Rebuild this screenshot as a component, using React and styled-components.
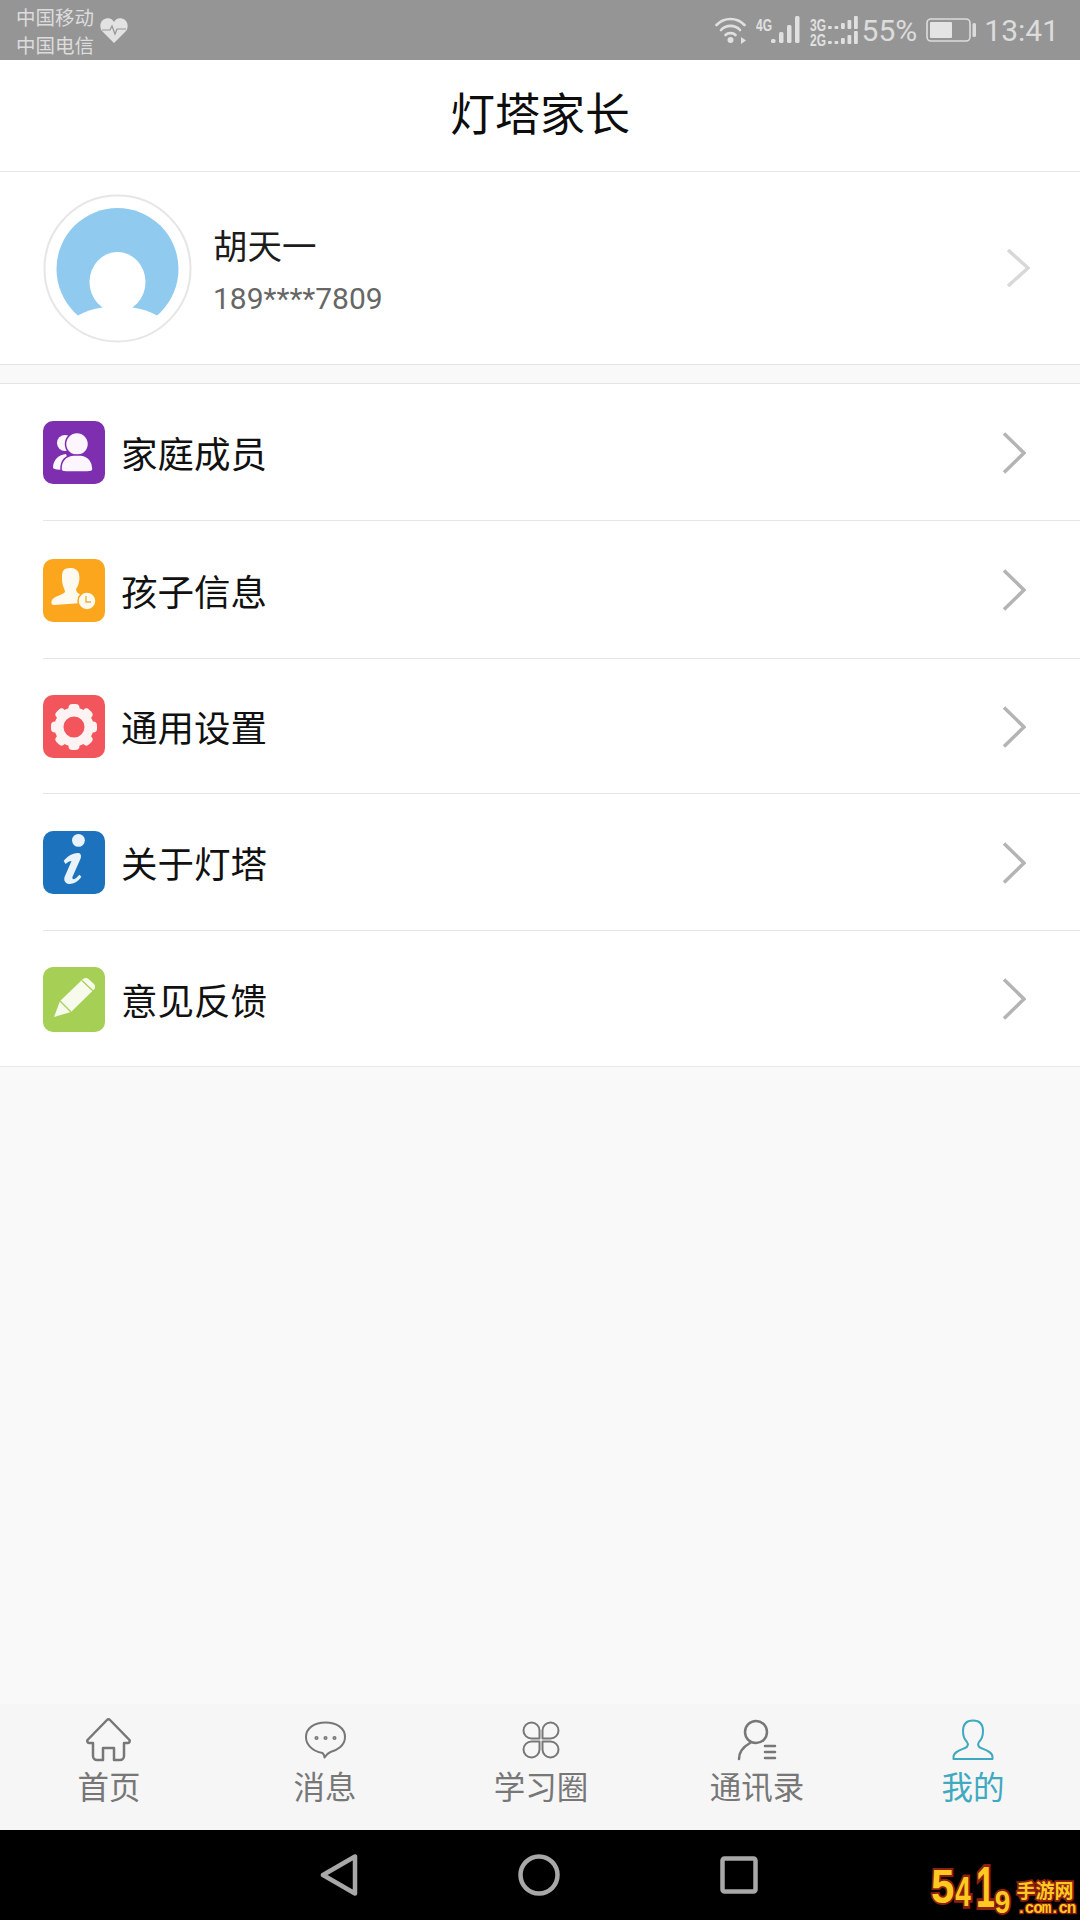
import styled, { createGlobalStyle } from "styled-components"

const GlobalStyle = createGlobalStyle`
  html, body {
    margin: 0;
    padding: 0;
    background: #f9f9f9;
  }
  * {
    box-sizing: border-box;
  }
`

const CJK = `Roboto, "Noto Sans CJK SC", sans-serif`

const Page = styled.div`
  width: 1080px;
  height: 1920px;
  display: flex;
  flex-direction: column;
  background: #f9f9f9;
  font-family: ${CJK};
  overflow: hidden;
  position: relative;
`

const StatusBar = styled.div`
  height: 60px;
  flex: none;
  background: #959595;
  color: #dedede;
  display: flex;
  align-items: center;
  justify-content: space-between;
  padding: 0 21px 0 16px;
`

const Carriers = styled.div`
  display: flex;
  align-items: center;
  gap: 6px;
`

const CarrierNames = styled.div`
  font-size: 19.5px;
  line-height: 28px;
  color: #dcdcdc;
  padding-top: 6px;
`

const StatusRight = styled.div`
  display: flex;
  align-items: center;
`

const NetLabels = styled.div`
  display: flex;
  flex-direction: column;
  align-self: flex-start;
  width: ${p => p.$w}px;
  margin: 5px 0 0 ${p => p.$left}px;
  font-family: "Liberation Sans", sans-serif;
  font-size: 16px;
  font-weight: 700;
  line-height: 15px;
  color: #e0e0e0;
  transform: scaleX(0.75);
  transform-origin: left top;
`

const Percent = styled.span`
  font-size: 30px;
  margin: 0 9px 0 4px;
  color: #dcdcdc;
`

const Clock = styled.span`
  font-size: 30px;
  margin-left: 8px;
  color: #dcdcdc;
`

const Header = styled.header`
  height: 112px;
  flex: none;
  background: #fff;
  border-bottom: 1px solid #e8e8e8;
  display: flex;
  align-items: center;
  justify-content: center;
  font-size: 45px;
  color: #0d0d0d;
  padding-bottom: 8px;
`

const Profile = styled.section`
  height: 193px;
  flex: none;
  background: #fff;
  border-bottom: 1px solid #e4e4e4;
  display: flex;
  align-items: center;
  padding: 0 50px 0 43px;
`

const Avatar = styled.svg`
  width: 150px;
  height: 150px;
  flex: none;
  margin-top: 2px;
`

const ProfileText = styled.div`
  flex: 1;
  margin: 6px 0 0 20px;
  display: flex;
  flex-direction: column;
  gap: 9px;
`

const Name = styled.div`
  font-size: 34.5px;
  line-height: 46px;
  color: #1c1c1c;
`

const Phone = styled.div`
  font-size: 30px;
  line-height: 40px;
  color: #666;
`

const Chevron = styled.svg`
  flex: none;
  fill: none;
  stroke: ${p => p.$color};
  stroke-width: 3.5;
`

const Menu = styled.section`
  margin-top: 18px;
  flex: none;
  background: #fff;
  border-top: 1px solid #e4e4e4;
  border-bottom: 1px solid #e8e8e8;
`

const Row = styled.div`
  height: ${p => p.$h}px;
  margin-left: 43px;
  padding: 1px 54px 0 0;
  display: flex;
  align-items: center;
  border-bottom: ${p => (p.$last ? "none" : "1.5px solid #e6e6e6")};
`

const IconBox = styled.div`
  width: 62px;
  height: ${p => p.$h || 63}px;
  flex: none;
  border-radius: 10px;
  background: ${p => p.$bg};
  display: flex;
  align-items: center;
  justify-content: center;
`

const RowLabel = styled.div`
  flex: 1;
  margin-left: 16px;
  font-size: 36.5px;
  color: #111;
`

const Spacer = styled.div`
  flex: 1;
`

const TabBar = styled.nav`
  height: 126px;
  flex: none;
  background: #f6f6f6;
  display: grid;
  grid-template-columns: repeat(5, 216px);
  padding-left: 1px;
`

const Tab = styled.div`
  display: flex;
  flex-direction: column;
  align-items: center;
  color: ${p => (p.$active ? "#3fa9bf" : "#777")};
  stroke: ${p => (p.$active ? "#3fa9bf" : "#777")};
`

const TabIcon = styled.div`
  height: 44px;
  margin-top: 14px;
  display: flex;
  align-items: center;
  justify-content: center;
  svg {
    fill: none;
    stroke: inherit;
    stroke-width: 2.5;
    stroke-linejoin: round;
    stroke-linecap: round;
  }
`

const TabLabel = styled.div`
  font-size: 31.5px;
  line-height: 40px;
  margin-top: 7px;
`

const NavBar = styled.div`
  height: 90px;
  flex: none;
  background: #000;
  display: flex;
  align-items: center;
  justify-content: center;
  gap: 160px;
  padding-right: 2px;
  svg {
    fill: none;
    stroke: #a8a8a8;
    stroke-width: 4.5;
    stroke-linejoin: round;
  }
`

const Watermark = styled.div`
  position: absolute;
  left: 931px;
  top: 1866px;
  width: 149px;
  height: 54px;
  display: flex;
  color: #ffc91f;
  font-weight: 700;
  -webkit-text-stroke: 3.5px #8c1f10;
  paint-order: stroke fill;
`

const Digit = styled.span`
  display: block;
  flex: none;
  font-family: "Liberation Sans", sans-serif;
  font-size: ${p => p.$size}px;
  line-height: 0.8;
  height: ${p => p.$size * 0.8}px;
  margin: ${p => p.$top}px 0 0 ${p => p.$left}px;
  transform: scaleY(${p => p.$sy});
  transform-origin: left top;
`

const WatermarkSide = styled.div`
  display: flex;
  flex-direction: column;
  margin: 14px 0 0 6px;
  font-family: "Noto Sans CJK SC", sans-serif;
  font-size: 19px;
  line-height: 20px;
  white-space: nowrap;
`

const WatermarkDomain = styled.div`
  font-family: "Liberation Mono", monospace;
  font-size: 16px;
  line-height: 18px;
  letter-spacing: -1.2px;
  -webkit-text-stroke: 2.5px #8c1f10;
`

function RowChevron() {
  return (
    <Chevron $color="#b4b4b4" width="24" height="42" viewBox="0 0 24 42">
      <path d="M2 1.5 L22 21 L2 40.5" />
    </Chevron>
  )
}

function FamilyIcon() {
  return (
    <svg width="44" height="44" viewBox="0 0 44 44">
      <circle cx="13" cy="12" r="8" fill="#fdf6ff" />
      <path d="M1 37 C1 28 7 24 14 23 L18 34 L14 38 C8 39 3 39 1 37 Z" fill="#fdf6ff" />
      <circle cx="25" cy="13" r="11.5" fill="#fdf6ff" stroke="#7d2fb0" strokeWidth="1.5" />
      <path d="M9 38 C9 29 14 25 21 24 L29 24 C37 25 41 31 41 38 C41 41 37 41 35 41 L14 41 C11 41 9 40 9 38 Z" fill="#fdf6ff" stroke="#7d2fb0" strokeWidth="1.5" />
    </svg>
  )
}

function ChildIcon() {
  return (
    <svg width="46" height="46" viewBox="0 0 46 46">
      <path d="M14 2 C19 0 27 1 28 7 C29 12 28 18 25 22 C25 25 27 27 31 28 L31 36 L3 38 C0 38 0 35 1 33 C3 29 12 28 14 25 C14 22 11 19 11 12 C11 7 11 4 14 2 Z" fill="#fffaf0" />
      <circle cx="36" cy="34" r="9" fill="#fffaf0" stroke="#fba61c" strokeWidth="1.5" />
      <path d="M35 29 V35 H40" fill="none" stroke="#f0b040" strokeWidth="1.4" />
    </svg>
  )
}

function GearIcon() {
  const teeth = [0, 45, 90, 135, 180, 225, 270, 315]
  return (
    <svg width="48" height="48" viewBox="0 0 48 48">
      {teeth.map(a => (
        <rect key={a} x="18.5" y="1" width="11" height="12" rx="4" fill="#fdf3f2" transform={`rotate(${a} 24 24)`} />
      ))}
      <circle cx="24" cy="24" r="15" fill="none" stroke="#fdf3f2" strokeWidth="9" />
    </svg>
  )
}

function InfoIcon() {
  return (
    <svg width="62" height="63" viewBox="0 0 63 63">
      <circle cx="36" cy="9" r="6.5" fill="#e8f3fb" />
      <path d="M21 30 C25 24 33 21 37 22 C39 23 39 26 38 28 L30 46 C29 49 32 49 34 47 L37 44 L39 46 C35 52 29 54 25 53 C22 52 21 49 22 46 L29 30 C27 30 25 31 23 33 Z" fill="#e8f3fb" />
    </svg>
  )
}

function PencilIcon() {
  return (
    <svg width="44" height="44" viewBox="0 0 44 44">
      <path d="M2 40 L8 24 L31 2 C33 0.5 35 0.5 36.5 2 L42 7 C43.5 9 43.5 11 42 12.5 L19 35 Z" fill="#f6fbec" />
      <path d="M8 24 L19 35" stroke="#a5cf55" strokeWidth="1.2" />
      <path d="M30 3.5 L41 14" stroke="#a5cf55" strokeWidth="1.2" />
    </svg>
  )
}

const menuItems = [
  { label: "家庭成员", bg: "#7d2fb0", h: 137, icon: <FamilyIcon /> },
  { label: "孩子信息", bg: "#fba61c", h: 138, icon: <ChildIcon /> },
  { label: "通用设置", bg: "#f2565c", h: 135, icon: <GearIcon /> },
  { label: "关于灯塔", bg: "#1d72bd", h: 137, icon: <InfoIcon /> },
  { label: "意见反馈", bg: "#a5cf55", h: 135, boxH: 65, icon: <PencilIcon />, last: true },
]

const tabs = [
  {
    label: "首页",
    icon: (
      <svg width="48" height="44" viewBox="0 0 46 44">
        <path d="M7 25 V38 a4 4 0 0 0 4 4 h6 V30 h11 V42 h6 a4 4 0 0 0 4-4 V25 h4 a2 2 0 0 0 1.5-3 L24 2 a2 2 0 0 0-3 0 L1.5 22 a2 2 0 0 0 1.5 3 Z" />
      </svg>
    ),
  },
  {
    label: "消息",
    icon: (
      <svg width="43" height="38" viewBox="0 0 42 38">
        <path d="M18 32 C7 30 1.5 23 1.5 16 C1.5 7 10 1.5 21 1.5 C32 1.5 40.5 7 40.5 16 C40.5 25 32 29.5 26 31 C23.5 32 21.5 34 20 36.5 C20 34.5 19 33 18 32 Z" strokeWidth="2" />
        <circle cx="12" cy="17" r="0.8" />
        <circle cx="21" cy="17" r="0.8" />
        <circle cx="30" cy="17" r="0.8" />
      </svg>
    ),
  },
  {
    label: "学习圈",
    icon: (
      <svg width="38" height="38" viewBox="0 0 38 38">
        <g strokeWidth="2">
          <path d="M17.5 17.5 H9.5 a8 8 0 1 1 8-8 Z" />
          <path d="M20.5 17.5 V9.5 a8 8 0 1 1 8 8 Z" />
          <path d="M17.5 20.5 V28.5 a8 8 0 1 1 -8-8 Z" />
          <path d="M20.5 20.5 H28.5 a8 8 0 1 1 -8 8 Z" />
        </g>
      </svg>
    ),
  },
  {
    label: "通讯录",
    icon: (
      <svg width="40" height="42" viewBox="0 0 40 42">
        <circle cx="19" cy="13" r="11" />
        <path d="M2 40 C2 33 6 28 13 24" />
        <path d="M28 27 H38 M28 33 H38 M28 39 H38" />
      </svg>
    ),
  },
  {
    label: "我的",
    active: true,
    icon: (
      <svg width="42" height="42" viewBox="0 0 42 42">
        <path d="M1.5 40 V38 C1.5 33 8 31 13 29 C16 28 16.5 25 15 23 C12 20 11 16 11 12 C11 5 15 1.5 21 1.5 C27 1.5 31 5 31 12 C31 16 30 20 27 23 C25.5 25 26 28 29 29 C34 31 40.5 33 40.5 38 V40 Z" strokeWidth="2" />
      </svg>
    ),
  },
]

const dualBarHeights = [3, 3, 6, 9, 13]

function App() {
  return (
    <Page>
      <GlobalStyle />
      <StatusBar>
        <Carriers>
          <CarrierNames>
            <div>中国移动</div>
            <div>中国电信</div>
          </CarrierNames>
          <svg width="28" height="27" viewBox="0 0 28 27">
            <path d="M14 26 L2 14 C-1 10 0 3 6 1.5 C9.5 0.5 12.5 2 14 5 C15.5 2 18.5 0.5 22 1.5 C28 3 29 10 26 14 Z" fill="#e2e2e2" />
            <path d="M2 13 H10 L12 9 L15 17 L17 12 H26" fill="none" stroke="#959595" strokeWidth="1.2" />
          </svg>
        </Carriers>
        <StatusRight>
          <svg width="33" height="28" viewBox="0 0 33 28">
            <g fill="none" stroke="#e0e0e0" strokeWidth="2.6" strokeLinecap="round">
              <path d="M1.5 9 C9 1 22 1 29.5 9" />
              <path d="M6 14 C11 8.5 20 8.5 25 14" />
              <path d="M10.5 19 C13 16.5 18 16.5 20.5 19" />
            </g>
            <circle cx="15.5" cy="24" r="3" fill="#e0e0e0" />
            <path d="M26 21 L31 24.5 L26 28 Z" fill="#e0e0e0" />
          </svg>
          <NetLabels $w={15} $left={8}>
            <span>4G</span>
          </NetLabels>
          <svg width="29" height="28" viewBox="0 0 29 28">
            {[4, 11, 18, 27].map((h, i) => (
              <rect key={i} x={i * 8} y={27 - h} width="4.5" height={h} rx="1.5" fill="#e0e0e0" />
            ))}
          </svg>
          <NetLabels $w={18} $left={10}>
            <span>3G</span>
            <span>2G</span>
          </NetLabels>
          <svg width="30" height="28" viewBox="0 0 30 28">
            {dualBarHeights.map((h, i) => (
              <g key={i} fill="#e0e0e0">
                <rect x={i * 6.5} y={13 - h} width="3.8" height={h} rx="1" />
                <rect x={i * 6.5} y={28 - h} width="3.8" height={h} rx="1" />
              </g>
            ))}
          </svg>
          <Percent>55%</Percent>
          <svg width="50" height="24" viewBox="0 0 50 24">
            <rect x="1" y="1" width="43" height="22" rx="4" fill="none" stroke="#dcdcdc" strokeWidth="1.6" />
            <rect x="4" y="4" width="22" height="16" rx="1" fill="#e4e4e4" />
            <rect x="46.5" y="5" width="3.5" height="14" rx="1.5" fill="#dcdcdc" />
          </svg>
          <Clock>13:41</Clock>
        </StatusRight>
      </StatusBar>

      <Header>灯塔家长</Header>

      <Profile>
        <Avatar viewBox="0 0 150 150">
          <circle cx="74.5" cy="75" r="61" fill="#90cbef" />
          <ellipse cx="74.5" cy="88" rx="28" ry="30" fill="#fff" />
          <ellipse cx="74.5" cy="150" rx="60" ry="38" fill="#fff" />
          <circle cx="74.5" cy="74.5" r="73" fill="none" stroke="#e6e6e6" strokeWidth="2" />
        </Avatar>
        <ProfileText>
          <Name>胡天一</Name>
          <Phone>189****7809</Phone>
        </ProfileText>
        <Chevron $color="#d8d8d8" width="24" height="38" viewBox="0 0 24 38">
          <path d="M2 1 L22 19 L2 37" />
        </Chevron>
      </Profile>

      <Menu>
        {menuItems.map(item => (
          <Row key={item.label} $h={item.h} $last={item.last}>
            <IconBox $bg={item.bg} $h={item.boxH}>{item.icon}</IconBox>
            <RowLabel>{item.label}</RowLabel>
            <RowChevron />
          </Row>
        ))}
      </Menu>

      <Spacer />

      <TabBar>
        {tabs.map(tab => (
          <Tab key={tab.label} $active={tab.active}>
            <TabIcon>{tab.icon}</TabIcon>
            <TabLabel>{tab.label}</TabLabel>
          </Tab>
        ))}
      </TabBar>

      <NavBar>
        <svg width="38" height="42" viewBox="0 0 38 42">
          <path d="M3 21 L35 2.5 V39.5 Z" />
        </svg>
        <svg width="42" height="42" viewBox="0 0 42 42">
          <circle cx="21" cy="21" r="18.5" />
        </svg>
        <svg width="38" height="38" viewBox="0 0 38 38">
          <rect x="2.5" y="2.5" width="33" height="33" rx="2" />
        </svg>
      </NavBar>

      <Watermark>
        <Digit $size={42} $sy={1.13} $top={2} $left={0}>5</Digit>
        <Digit $size={28} $sy={1.5} $top={10} $left={1}>4</Digit>
        <Digit $size={34} $sy={1.7} $top={-2} $left={5}>1</Digit>
        <Digit $size={28} $sy={1.1} $top={25} $left={0}>9</Digit>
        <WatermarkSide>
          <div>手游网</div>
          <WatermarkDomain>.com.cn</WatermarkDomain>
        </WatermarkSide>
      </Watermark>
    </Page>
  )
}

export default App
